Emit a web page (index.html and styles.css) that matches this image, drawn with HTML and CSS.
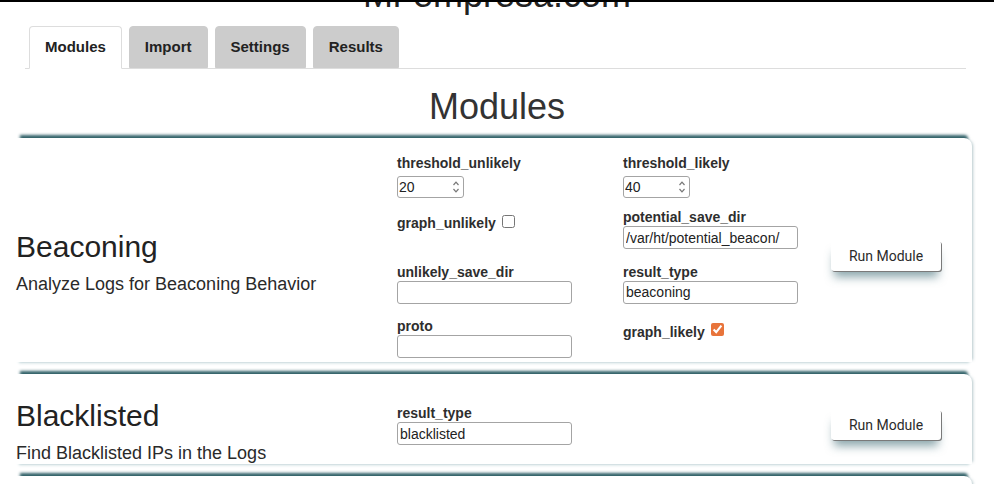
FILE: index.html
```html
<!DOCTYPE html>
<html>
<head>
<meta charset="utf-8">
<title>Modules</title>
<link rel="stylesheet" href="styles.css">
</head>
<body>
<div class="topline"></div>
<h1 class="site-title">Mi-empresa.com</h1>
<nav class="tabs">
  <a class="tab active">Modules</a>
  <a class="tab">Import</a>
  <a class="tab">Settings</a>
  <a class="tab">Results</a>
</nav>
<h2 class="page-title">Modules</h2>

<section class="card">
  <div class="info">
    <h3 class="mod-name">Beaconing</h3>
    <p class="mod-desc">Analyze Logs for Beaconing Behavior</p>
  </div>
  <div class="fields">
    <div class="field">
      <label class="lbl">threshold_unlikely</label>
      <div class="num"><input class="num-in" type="text" value="20"><svg class="spin" width="8" height="14" viewBox="0 0 8 14"><path d="M1.5 5 L4 2.2 L6.5 5" fill="none" stroke="#777" stroke-width="1.2"/><path d="M1.5 9 L4 11.8 L6.5 9" fill="none" stroke="#777" stroke-width="1.2"/></svg></div>
    </div>
    <div class="field">
      <label class="lbl">threshold_likely</label>
      <div class="num"><input class="num-in" type="text" value="40"><svg class="spin" width="8" height="14" viewBox="0 0 8 14"><path d="M1.5 5 L4 2.2 L6.5 5" fill="none" stroke="#777" stroke-width="1.2"/><path d="M1.5 9 L4 11.8 L6.5 9" fill="none" stroke="#777" stroke-width="1.2"/></svg></div>
    </div>
    <div class="field check-field">
      <label class="lbl inline">graph_unlikely</label><input class="chk" type="checkbox">
    </div>
    <div class="field">
      <label class="lbl">potential_save_dir</label>
      <input class="txt" type="text" value="/var/ht/potential_beacon/">
    </div>
    <div class="field">
      <label class="lbl">unlikely_save_dir</label>
      <input class="txt" type="text" value="">
    </div>
    <div class="field">
      <label class="lbl">result_type</label>
      <input class="txt" type="text" value="beaconing">
    </div>
    <div class="field">
      <label class="lbl">proto</label>
      <input class="txt" type="text" value="">
    </div>
    <div class="field check-field">
      <label class="lbl inline">graph_likely</label><input class="chk" type="checkbox" checked>
    </div>
  </div>
  <button class="run">Run Module</button>
</section>

<section class="card">
  <div class="info">
    <h3 class="mod-name">Blacklisted</h3>
    <p class="mod-desc">Find Blacklisted IPs in the Logs</p>
  </div>
  <div class="fields">
    <div class="field">
      <label class="lbl">result_type</label>
      <input class="txt" type="text" value="blacklisted">
    </div>
  </div>
  <button class="run">Run Module</button>
</section>

<section class="card card-next"></section>
</body>
</html>
```

FILE: styles.css
```css
* { box-sizing: border-box; }

html, body {
  margin: 0;
  padding: 0;
  background: #fff;
  overflow: hidden;
}

body {
  font-family: "Liberation Sans", Arial, sans-serif;
  color: #333;
  width: 994px;
  height: 484px;
}

.topline {
  height: 2px;
  background: #000;
  position: relative;
  z-index: 2;
}

.site-title {
  margin: -27px 0 0;
  font-size: 36px;
  line-height: 40px;
  font-weight: normal;
  text-align: center;
  color: #222;
}

.tabs {
  display: flex;
  align-items: flex-start;
  gap: 7px;
  margin: 11px 28px 0 25px;
  padding-left: 4px;
  border-bottom: 1px solid #ddd;
}

.tab {
  display: block;
  padding: 11px 15px;
  line-height: 18px;
  font-size: 15px;
  font-weight: bold;
  color: #222;
  background: #ccc;
  border: 1px solid #ccc;
  border-radius: 4px 4px 0 0;
}

.tab.active {
  background: #fff;
  border-color: #ddd;
  border-bottom-color: #fff;
  padding-bottom: 12px;
  margin-bottom: -1px;
}

.page-title {
  margin: 18px 0 11px;
  font-size: 36px;
  line-height: 40px;
  font-weight: normal;
  text-align: center;
  color: #333;
}

.card {
  display: flex;
  align-items: center;
  margin: 0 22px 12px 16px;
  background: #fff;
  border-top-right-radius: 8px;
  box-shadow: 0 -7px 3px -4px rgba(38, 88, 96, 0.95),
              3px 0 3px -2px rgba(110, 145, 152, 0.5),
              0 4px 3px -3px rgba(120, 165, 172, 0.45);
}

.card-next {
  min-height: 60px;
}

.info {
  width: 381px;
  flex: none;
  padding-top: 25px;
}

.mod-name {
  margin: 0;
  font-size: 30px;
  line-height: 34px;
  font-weight: normal;
  color: #222;
}

.mod-desc {
  margin: 9px 0 0;
  font-size: 18px;
  line-height: 22px;
  color: #2a2a2a;
}

.fields {
  flex: none;
  display: grid;
  grid-template-columns: 226px 208px;
  grid-auto-rows: 44px;
  row-gap: 10.33px;
  padding-top: 17px;
}

.field {
  display: flex;
  flex-direction: column;
  align-items: flex-start;
}

.check-field {
  flex-direction: row;
  align-items: center;
  align-self: start;
  padding-top: 6px;
}

.lbl {
  display: block;
  font-size: 14px;
  line-height: 16px;
  font-weight: bold;
  color: #2e2e2e;
}

.lbl.inline {
  display: inline-block;
}

.txt {
  display: block;
  width: 175px;
  height: 23px;
  margin: 1px 0 0;
  padding: 0 2px;
  border: 1px solid #a4a4a4;
  border-radius: 3px;
  font-family: "Liberation Sans", Arial, sans-serif;
  font-size: 14px;
  color: #222;
  background: #fff;
  outline: none;
}

.num {
  display: flex;
  align-items: center;
  width: 67px;
  height: 22px;
  margin-top: 5px;
  border: 1px solid #a4a4a4;
  border-radius: 3px;
  background: #fff;
}

.num-in {
  width: 54px;
  height: 20px;
  border: 0;
  padding: 0 0 0 1px;
  margin: 0;
  font-family: "Liberation Sans", Arial, sans-serif;
  font-size: 14px;
  color: #222;
  background: transparent;
  outline: none;
}

.spin {
  display: block;
  flex: none;
}

.chk {
  width: 13px;
  height: 13px;
  margin: 0 0 0 6px;
  accent-color: #e8743b;
  position: relative;
  top: -2px;
}

.run {
  flex: none;
  width: 110px;
  height: 30px;
  margin-top: 12px;
  padding: 0;
  border: 0;
  border-radius: 3px;
  background: #fff;
  font-family: Roboto, "Liberation Sans", sans-serif;
  font-size: 14px;
  color: #2b2b2b;
  box-shadow: 1px 1px 0 #7a7a7a,
              0 9px 10px -3px rgba(45, 95, 105, 0.55);
}
```
